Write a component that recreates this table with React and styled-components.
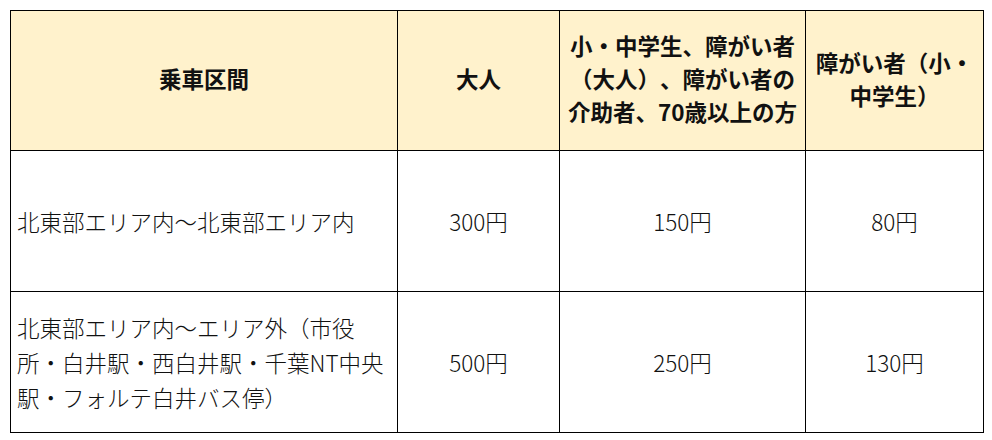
import React from "react"
import styled, { createGlobalStyle } from "styled-components"

const GlobalStyle = createGlobalStyle`
  html, body {
    margin: 0;
    padding: 0;
    background: #ffffff;
  }
  body {
    font-family: "Noto Sans CJK JP", "Noto Sans", sans-serif;
    color: #111111;
    text-spacing-trim: space-all;
  }
`

const Page = styled.div`
  padding: 10px 0 0 10px;
`

const FareTable = styled.table`
  border-collapse: collapse;
  table-layout: fixed;
  width: 973px;
`

const HeadCell = styled.th`
  height: 135px;
  padding: 0 4px 4px;
  background: #fff2cc;
  border: 1px solid #000000;
  font-size: 22.5px;
  font-weight: 700;
  line-height: 33px;
  text-align: center;
  vertical-align: middle;
  white-space: nowrap;
  text-spacing-trim: space-all;
`

const Cell = styled.td`
  height: 140px;
  padding: 0 6px;
  border: 1px solid #000000;
  font-size: 22.5px;
  font-weight: 300;
  line-height: 35px;
  text-align: ${(p) => (p.$left ? "left" : "center")};
  vertical-align: middle;
  white-space: nowrap;
  text-spacing-trim: space-all;
`

const columns = [387, 162, 246, 178]

const rows = [
  {
    section: "北東部エリア内〜北東部エリア内",
    fares: ["300円", "150円", "80円"],
  },
  {
    section: (
      <>
        北東部エリア内〜エリア外（市役
        <br />
        所・白井駅・西白井駅・千葉NT中央
        <br />
        駅・フォルテ白井バス停）
      </>
    ),
    fares: ["500円", "250円", "130円"],
  },
]

export default function App() {
  return (
    <>
      <GlobalStyle />
      <Page>
        <FareTable>
          <colgroup>
            {columns.map((w, i) => (
              <col key={i} style={{ width: w }} />
            ))}
          </colgroup>
          <thead>
            <tr>
              <HeadCell>乗車区間</HeadCell>
              <HeadCell>大人</HeadCell>
              <HeadCell>
                小・中学生、障がい者
                <br />
                （大人）、障がい者の
                <br />
                介助者、70歳以上の方
              </HeadCell>
              <HeadCell>
                障がい者（小・
                <br />
                中学生）
              </HeadCell>
            </tr>
          </thead>
          <tbody>
            {rows.map((row, i) => (
              <tr key={i}>
                <Cell $left>{row.section}</Cell>
                {row.fares.map((fare) => (
                  <Cell key={fare}>{fare}</Cell>
                ))}
              </tr>
            ))}
          </tbody>
        </FareTable>
      </Page>
    </>
  )
}
